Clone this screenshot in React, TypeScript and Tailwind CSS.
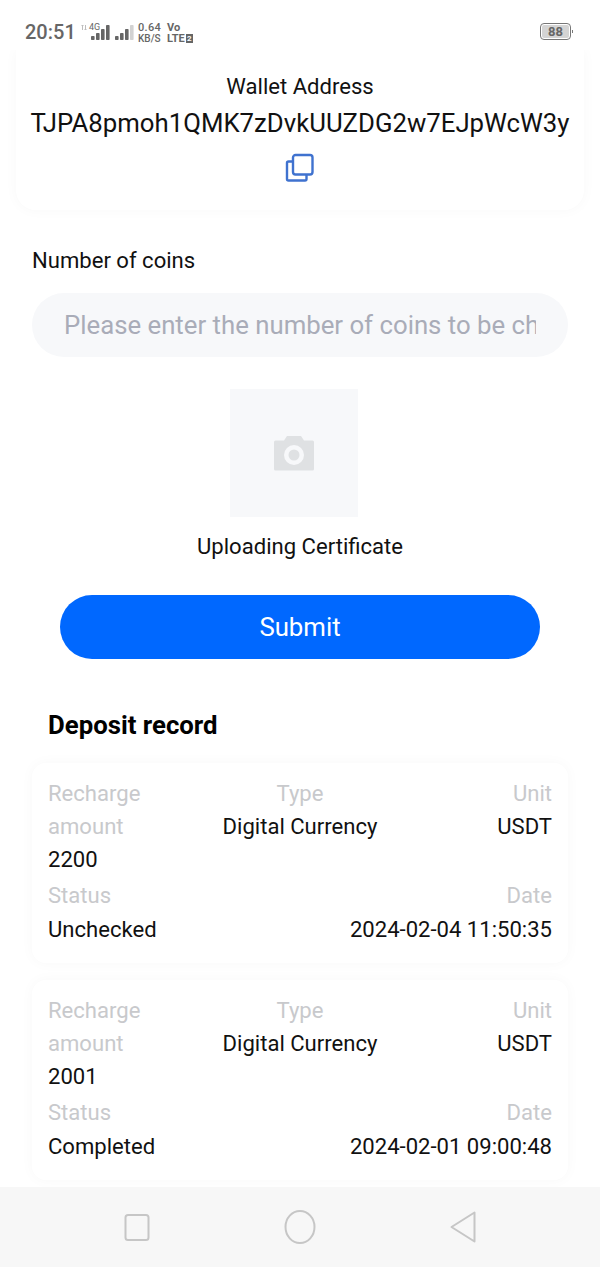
import React from 'react';

type DepositRecord = { amount: string; status: string; date: string };

const records: DepositRecord[] = [
    { amount: '2200', status: 'Unchecked', date: '2024-02-04 11:50:35' },
    { amount: '2001', status: 'Completed', date: '2024-02-01 09:00:48' },
];

function SignalBars({ dim }: { dim?: boolean }) {
    const bars = [4, 7, 11, 15];
    return (
        <svg width="19" height="16" viewBox="0 0 19 16">
            {bars.map((h, i) => (
                <rect
                    key={i}
                    x={i * 5}
                    y={16 - h}
                    width="3.6"
                    height={h}
                    rx="0.8"
                    fill={dim && i === 3 ? '#d2d2d2' : '#666666'}
                />
            ))}
        </svg>
    );
}

function StatusBar() {
    return (
        <div className="h-[50px] shrink-0 bg-white flex items-start pl-[25px] pr-[27px] pt-[20px] text-[#666666]">
            <span className="w-[50px] text-[20px] leading-[24px] font-medium">20:51</span>
            <div className="relative ml-[6px] w-[33px] h-[24px]">
                <svg className="absolute left-0 top-[4px]" width="6" height="7" viewBox="0 0 6 7" fill="none" stroke="#bdbdbd" strokeWidth="1">
                    <path d="M1.500 6V1M0.500 2l1-1 1 1M4.500 1v5M3.500 5l1 1 1-1" />
                </svg>
                <span className="absolute left-[8px] top-[2px] text-[9px] leading-[10px]">4G</span>
                <div className="absolute left-[10px] top-[4px]">
                    <SignalBars />
                </div>
            </div>
            <div className="ml-[1px] pt-[4px] w-[19px]">
                <SignalBars dim />
            </div>
            <div className="ml-[4px] w-[24px] flex flex-col font-medium pt-[2px] whitespace-nowrap">
                <span className="text-[11px] leading-[11px] tracking-[0.3px]">0.64</span>
                <span className="text-[10px] leading-[11px]">KB/S</span>
            </div>
            <div className="ml-[5px] flex flex-col text-[11px] leading-[11px] font-bold pt-[2px]">
                <span>Vo</span>
                <span className="flex items-center">
                    LTE
                    <span className="ml-[1px] w-[7px] h-[9px] bg-[#666666] text-white text-[8px] leading-[9px] text-center">2</span>
                </span>
            </div>
            <div className="ml-auto mt-[3px] flex items-center">
                <div className="w-[31px] h-[17px] border border-[#777777] rounded-[4px] p-[1px]">
                    <div className="h-full w-full bg-[#d4d4d4] rounded-[2px] text-[13px] leading-[13px] font-bold text-center">88</div>
                </div>
                <div className="ml-[1px] w-[1px] h-[3px] bg-[#777777]" />
            </div>
        </div>
    );
}

function CopyIcon() {
    return (
        <svg width="30" height="30" viewBox="0 0 30 30" fill="none" stroke="#3f72cf" strokeWidth="2.4" strokeLinejoin="round">
            <rect x="8" y="2" width="19.5" height="19.5" rx="2.5" />
            <path d="M8 8.5H3.5a1.5 1.5 0 0 0-1.5 1.5v16a1.5 1.5 0 0 0 1.5 1.5H20a1.5 1.5 0 0 0 1.5-1.5V21.5" />
        </svg>
    );
}

function CameraIcon() {
    return (
        <svg width="40" height="36" viewBox="0 0 40 36">
            <path
                fill="#dfe1e3"
                d="M1.500 5.500H10L13 1h14l3 4.500h8.500A1.500 1.500 0 0 1 40 7v27a1.500 1.500 0 0 1-1.500 1.500h-37A1.500 1.500 0 0 1 0 34V7a1.500 1.500 0 0 1 1.500-1.500z"
            />
            <circle cx="20" cy="20" r="10" fill="#f7f8fa" />
            <circle cx="20" cy="20" r="5.500" fill="#dfe1e3" />
        </svg>
    );
}

function RecordCard({ record }: { record: DepositRecord }) {
    return (
        <div className="h-[200px] shrink-0 bg-white rounded-[14px] shadow-[0_0_14px_rgba(0,0,0,0.03)] px-4 pt-[14px] text-[22.08px] leading-[33.12px] text-[#111111]">
            <div className="grid grid-cols-[110px_1fr_110px]">
                <div>
                    <div className="text-[#c8c9cc]">Recharge amount</div>
                    <div>{record.amount}</div>
                </div>
                <div className="text-center">
                    <div className="text-[#c8c9cc]">Type</div>
                    <div>Digital Currency</div>
                </div>
                <div className="text-right">
                    <div className="text-[#c8c9cc]">Unit</div>
                    <div>USDT</div>
                </div>
            </div>
            <div className="flex justify-between mt-[3px]">
                <div>
                    <div className="text-[#c8c9cc]">Status</div>
                    <div>{record.status}</div>
                </div>
                <div className="text-right">
                    <div className="text-[#c8c9cc]">Date</div>
                    <div>{record.date}</div>
                </div>
            </div>
        </div>
    );
}

function NavBar() {
    return (
        <div className="h-[80px] shrink-0 bg-[#f7f7f7] flex items-center justify-center gap-[134px] pb-[1px]">
            <svg width="26" height="28" viewBox="0 0 26 28" fill="none" stroke="#c6c6c6" strokeWidth="2">
                <rect x="1.500" y="2" width="23" height="25" rx="2.500" />
            </svg>
            <svg width="32" height="34" viewBox="0 0 32 34" fill="none" stroke="#c6c6c6" strokeWidth="2">
                <ellipse cx="16" cy="17" rx="14.500" ry="16" />
            </svg>
            <svg width="26" height="34" viewBox="0 0 26 34" fill="none" stroke="#c6c6c6" strokeWidth="2" strokeLinejoin="round">
                <path d="M24.500 2.500v29L1.500 17z" />
            </svg>
        </div>
    );
}

export default function App() {
    return (
        <div
            className="h-[1267px] w-[600px] flex flex-col overflow-hidden bg-white"
            style={{ fontFamily: 'Roboto, "Noto Sans", sans-serif' }}
        >
            <StatusBar />
            <div className="flex-1 overflow-hidden">
                <div className="mx-4 h-[160px] rounded-b-[20px] bg-white shadow-[0_0_14px_rgba(0,0,0,0.03)] flex flex-col items-center pt-[20px]">
                    <div className="text-[22.08px] leading-[33px] text-[#111111]">Wallet Address</div>
                    <div className="text-[25.76px] leading-[38px] text-[#111111] whitespace-nowrap mt-[1px]">TJPA8pmoh1QMK7zDvkUUZDG2w7EJpWcW3y</div>
                    <div className="mt-[11px]">
                        <CopyIcon />
                    </div>
                </div>

                <div className="px-8 mt-[34px] text-[22.08px] leading-[33px] text-[#111111]">Number of coins</div>
                <div className="mx-8 mt-[16px] h-[64px] rounded-full bg-[#f7f8fa] px-8 flex items-center">
                    <input
                        className="w-full bg-transparent outline-none text-[25.76px] placeholder:text-[#a9acb8]"
                        placeholder="Please enter the number of coins to be charged"
                    />
                </div>

                <div className="mt-[32px] ml-[230px] w-[128px] h-[128px] bg-[#f7f8fa] flex items-center justify-center">
                    <CameraIcon />
                </div>
                <div className="mt-[13px] text-center text-[22.08px] leading-[33px] text-[#111111]">Uploading Certificate</div>

                <button className="block mx-auto mt-[32px] w-[480px] h-[64px] rounded-full bg-[#0068ff] text-white text-[25.76px]">
                    Submit
                </button>

                <div className="px-12 mt-[47px] text-[25.76px] leading-[38px] font-bold text-black">Deposit record</div>

                <div className="mx-8 mt-[19px] flex flex-col gap-[17px]">
                    {records.map((r) => (
                        <RecordCard key={r.amount} record={r} />
                    ))}
                </div>
            </div>
            <NavBar />
        </div>
    );
}
